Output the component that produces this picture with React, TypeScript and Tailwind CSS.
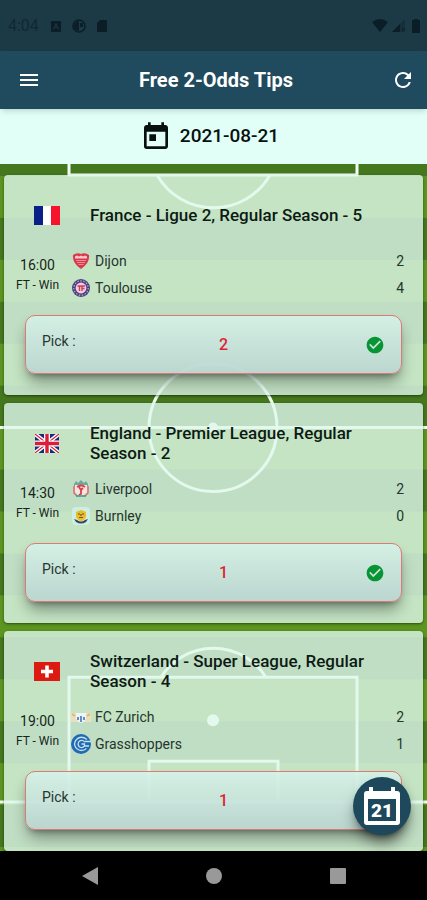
import React from 'react';
import { MdMenu, MdRefresh, MdCheckCircle, MdToday } from 'react-icons/md';

interface Team {
  name: string;
  score: number;
  crest: React.ReactNode;
}

interface Tip {
  id: number;
  flag: React.ReactNode;
  league: string;
  time: string;
  market: string;
  home: Team;
  away: Team;
  pick: string;
  won: boolean;
}

const FranceFlag = () => (
  <svg viewBox="0 0 26 19" className="w-[26px]" aria-label="France">
    <rect width="26" height="19" fill="#fff" />
    <rect width="9" height="19" fill="#0a1f87" />
    <rect x="17" width="9" height="19" fill="#f5142b" />
  </svg>
);

const EnglandFlag = () => (
  <svg viewBox="0 0 24 19" className="w-6" aria-label="England">
    <rect width="24" height="19" fill="#1b2a78" />
    <path d="M0 0l24 19M24 0L0 19" stroke="#fff" strokeWidth="4" />
    <path d="M0 0l24 19M24 0L0 19" stroke="#dc1c38" strokeWidth="1.2" />
    <path d="M12 0v19M0 9.500h24" stroke="#fff" strokeWidth="6" />
    <path d="M12 0v19M0 9.500h24" stroke="#dc1c38" strokeWidth="3.400" />
  </svg>
);

const SwissFlag = () => (
  <svg viewBox="0 0 26 19" className="w-[26px]" aria-label="Switzerland">
    <rect width="26" height="19" fill="#dc1a12" />
    <path d="M13 3.500v12M7 9.500h12" stroke="#fff" strokeWidth="3.600" />
  </svg>
);

const DijonCrest = () => (
  <svg viewBox="0 0 20 20" className="size-5">
    <path d="M2 4q4-3 8-1 4-2 8 1 1 8-8 14Q1 12 2 4z" fill="#d83a4c" />
    <path d="M4 5.500l2-1 2 1 2-1 2 1 2-1 2 1v2H4z" fill="#f7c9cf" />
    <path d="M5 9.500h10M6 11.500h8M7.500 13.500h5" stroke="#f3a3ac" strokeWidth=".8" />
  </svg>
);

const ToulouseCrest = () => (
  <svg viewBox="0 0 20 20" className="size-5">
    <circle cx="10" cy="10" r="9" fill="#4a4080" />
    <circle cx="10" cy="10" r="7.200" fill="none" stroke="#b9aed0" strokeWidth="1.200" strokeDasharray="1.500 1.500" />
    <circle cx="10" cy="10" r="5.400" fill="#f0cfdc" />
    <path d="M6.500 8h4M8.500 8v5M11 13V8h3M11 10.500h2.500" stroke="#cf3a5c" strokeWidth="1.400" fill="none" />
  </svg>
);

const LiverpoolCrest = () => (
  <svg viewBox="0 0 20 20" className="size-5">
    <path d="M3 5l2-3 2 2 3-3 3 3 2-2 2 3v2H3z" fill="#6fa79b" />
    <path d="M4 6h12v7l-6 5-6-5z" fill="#f9e3e3" />
    <path d="M6 8q4-3 8 0M8 8l2 3 2-2M10 10v5l-2 1" stroke="#d8404a" strokeWidth="1.800" fill="none" />
    <path d="M3 7v7l3 3M17 7v7l-3 3" stroke="#df6468" strokeWidth="1.400" fill="none" />
    <path d="M5 17h10" stroke="#3f9484" strokeWidth="1.500" />
  </svg>
);

const BurnleyCrest = () => (
  <svg viewBox="0 0 20 20" className="size-5">
    <rect x="1" y="1" width="18" height="18" rx="4" fill="#cdefe3" />
    <path d="M5 6l2-1 3-1 3 1 2 1v5q-2 4-5 4t-5-4z" fill="#e9bd2c" />
    <path d="M7 8h2M11 8h2M8 11.500h4M10 8v2" stroke="#6c541d" strokeWidth="1.200" />
    <path d="M3 13l3 1q4 3 8 0l3-1-2 3q-5 3-10 0z" fill="#39445f" />
  </svg>
);

const ZurichCrest = () => (
  <svg viewBox="0 0 20 20" className="size-5">
    <rect y="6" width="20" height="9" fill="#eadfbe" />
    <path d="M5 6h10v5q-1 4-5 5-4-1-5-5z" fill="#eef5f7" />
    <path d="M7 10v3M10 9v6M13 10v3" stroke="#3b69b6" strokeWidth="1.500" />
    <path d="M1 7l3 2M19 7l-3 2" stroke="#f0b35b" strokeWidth="2" />
  </svg>
);

const GrasshoppersCrest = () => (
  <svg viewBox="0 0 20 20" className="size-5">
    <circle cx="10" cy="10" r="10" fill="#2168b5" />
    <path d="M16 5.500Q10 1 5.500 5.500q-4 4.500 0 9 5 4 10 0" stroke="#c4e4ec" strokeWidth="1.300" fill="none" />
    <path d="M14 8q-3-3-6-.5-2 3 .5 5.500 3 1.500 5-1v-2h-3M14 7.500h6M14 12h4" stroke="#c4e4ec" strokeWidth="1.300" fill="none" />
  </svg>
);

const tips: Tip[] = [
  {
    id: 1,
    flag: <FranceFlag />,
    league: 'France - Ligue 2, Regular Season - 5',
    time: '16:00',
    market: 'FT - Win',
    home: { name: 'Dijon', score: 2, crest: <DijonCrest /> },
    away: { name: 'Toulouse', score: 4, crest: <ToulouseCrest /> },
    pick: '2',
    won: true,
  },
  {
    id: 2,
    flag: <EnglandFlag />,
    league: 'England - Premier League, Regular Season - 2',
    time: '14:30',
    market: 'FT - Win',
    home: { name: 'Liverpool', score: 2, crest: <LiverpoolCrest /> },
    away: { name: 'Burnley', score: 0, crest: <BurnleyCrest /> },
    pick: '1',
    won: true,
  },
  {
    id: 3,
    flag: <SwissFlag />,
    league: 'Switzerland - Super League, Regular Season - 4',
    time: '19:00',
    market: 'FT - Win',
    home: { name: 'FC Zurich', score: 2, crest: <ZurichCrest /> },
    away: { name: 'Grasshoppers', score: 1, crest: <GrasshoppersCrest /> },
    pick: '1',
    won: true,
  },
];

const StatusBar = () => (
  <div className="flex h-[51px] items-center justify-between bg-[#1c3a45] pr-1 pl-2 text-[#0b1d27]">
    <div className="flex items-center gap-[10px]">
      <span className="w-8 text-base text-[#102832]">4:04</span>
      <svg viewBox="0 0 12 12" className="size-3">
        <rect x="1" y="1" width="10" height="11" rx="1" fill="currentColor" />
        <path d="M3.500 9.500L6 3.500l2.500 6M4.500 7.500h3" stroke="#1c3a45" fill="none" />
      </svg>
      <svg viewBox="0 0 14 14" className="size-[14px]">
        <circle cx="7" cy="7" r="6" fill="none" stroke="currentColor" strokeWidth="1.600" />
        <path d="M7 2v10Q2 11 2 7t5-5zM8 4h3v4H8z" fill="currentColor" />
      </svg>
      <svg viewBox="0 0 12 14" className="h-[14px]">
        <path d="M4 1h7v12H1V4z" fill="currentColor" />
      </svg>
    </div>
    <div className="flex items-center gap-1">
      <svg viewBox="0 0 16 13" className="h-[13px]">
        <path d="M0 3q8-6 16 0L8 13z" fill="currentColor" />
      </svg>
      <svg viewBox="0 0 13 13" className="h-[13px]">
        <path d="M13 0v13H0z" fill="currentColor" opacity=".35" />
        <path d="M8 5v8H0z" fill="currentColor" />
        <path d="M10 9l3 3M13 9l-3 3" stroke="currentColor" />
      </svg>
      <svg viewBox="0 0 14 14" className="h-[14px]">
        <path d="M5 0h4v1h2v13H3V1h2z" fill="currentColor" />
      </svg>
    </div>
  </div>
);

// Grass stripes and line markings behind the cards
const Pitch = () => (
  <svg
    viewBox="0 0 427 688"
    preserveAspectRatio="none"
    className="absolute inset-0 size-full"
    aria-hidden="true"
  >
    <defs>
      <pattern id="grass" y="12" width="427" height="84" patternUnits="userSpaceOnUse">
        <rect width="427" height="42" fill="#5c9620" />
        <rect y="42" width="427" height="42" fill="#45771e" />
      </pattern>
    </defs>
    <rect width="427" height="688" fill="url(#grass)" />
    <g fill="none" stroke="#f2fff5" strokeWidth="3">
      <path d="M69 0v11h288V0M0 264h427M0 639h427" />
      <path d="M157 11a65 65 0 0 0 113 0" />
      <circle cx="213" cy="264" r="64" />
      <path d="M69 639V514h288v125M149 639v-41h129v41M161 514a62 62 0 0 1 105 0" />
    </g>
    <circle cx="213" cy="557" r="6" fill="#f2fff5" />
    <circle cx="213" cy="264" r="5" fill="#f2fff5" />
  </svg>
);

const TeamRow: React.FC<{ team: Team }> = ({ team }) => (
  <div className="flex h-[27px] items-center">
    {team.crest}
    <span className="ml-1 flex-1 text-sm text-[#26352f]">{team.name}</span>
    <span className="text-sm text-[#26352f]">{team.score}</span>
  </div>
);

const TipCard: React.FC<{ tip: Tip }> = ({ tip }) => (
  <article className="h-[220px] rounded-[4px] bg-[#dff7ec]/80 pt-2 shadow-sm shadow-black/40">
    <header className="flex h-16 items-center">
      <div className="flex w-[86px] justify-center">{tip.flag}</div>
      <h2 className="flex-1 pr-12 text-[17px] leading-5 font-medium text-[#0d1a15]">{tip.league}</h2>
    </header>
    <div className="flex h-[60px]">
      <div className="flex w-[67px] flex-col items-center pt-2">
        <time className="text-sm leading-5 text-[#17241e]">{tip.time}</time>
        <span className="text-xs leading-5 text-[#17241e]">{tip.market}</span>
      </div>
      <div className="flex-1 pr-[19px]">
        <TeamRow team={tip.home} />
        <TeamRow team={tip.away} />
      </div>
    </div>
    <div className="mx-[21px] mt-2 grid h-[59px] grid-cols-[8fr_2fr_7fr] items-center rounded-[10px] border border-[#e07878] bg-linear-to-b from-[#d6f2e8]/90 to-[#bad5d0]/90 px-4 shadow-lg shadow-black/40">
      <span className="pb-2 text-sm text-[#26352f]">Pick :</span>
      <strong className="text-center text-base font-medium text-[#e01f35]">{tip.pick}</strong>
      {tip.won && <MdCheckCircle className="size-5 justify-self-end text-[#079433]" />}
    </div>
  </article>
);

export default function App() {
  return (
    <div className="flex h-screen flex-col overflow-hidden bg-black font-[Roboto,sans-serif]">
      <StatusBar />
      <header className="relative z-10 flex h-[58px] items-center bg-[#204a5d] pr-3 pl-[17px] text-white shadow-md">
        <button aria-label="Menu">
          <MdMenu className="size-6" />
        </button>
        <h1 className="flex-1 text-center text-xl font-bold">Free 2-Odds Tips</h1>
        <button aria-label="Refresh">
          <MdRefresh className="size-6" />
        </button>
      </header>
      <div className="flex h-[55px] items-center justify-center gap-2 bg-[#e1fff7] pr-2 text-[#08110f]">
        <MdToday className="size-8" />
        <time className="text-[19px] font-medium">2021-08-21</time>
      </div>

      <main className="relative flex-1 overflow-hidden">
        <Pitch />
        <div className="relative flex flex-col gap-2 px-1 pt-[11px]">
          {tips.map((tip) => (
            <TipCard key={tip.id} tip={tip} />
          ))}
        </div>
        <button
          aria-label="Choose date"
          className="absolute right-4 bottom-4 flex size-[58px] items-center justify-center rounded-full bg-[#1e485b] shadow-lg shadow-black/50"
        >
          <svg viewBox="0 0 36 40" className="h-10">
            <path d="M5 1h4v4h18V1h4v4h2q3 0 3 3v28q0 3-3 3H3q-3 0-3-3V8q0-3 3-3h2z" fill="#fff" />
            <path d="M4 13h28v22H4z" fill="#1e485b" />
            <text x="18" y="31" textAnchor="middle" fontSize="19" fontWeight="900" fill="#fff">21</text>
          </svg>
        </button>
      </main>

      <nav className="relative flex h-[49px] items-center justify-center gap-[108px] bg-black text-[#999]">
        <button aria-label="Back">
          <svg viewBox="0 0 16 18" className="h-[18px]">
            <path d="M16 0v18L0 9z" fill="currentColor" />
          </svg>
        </button>
        <button aria-label="Home" className="size-4 rounded-full bg-[#999]" />
        <button aria-label="Recent apps" className="size-4 rounded-[1px] bg-[#999]" />
      </nav>
    </div>
  );
}
